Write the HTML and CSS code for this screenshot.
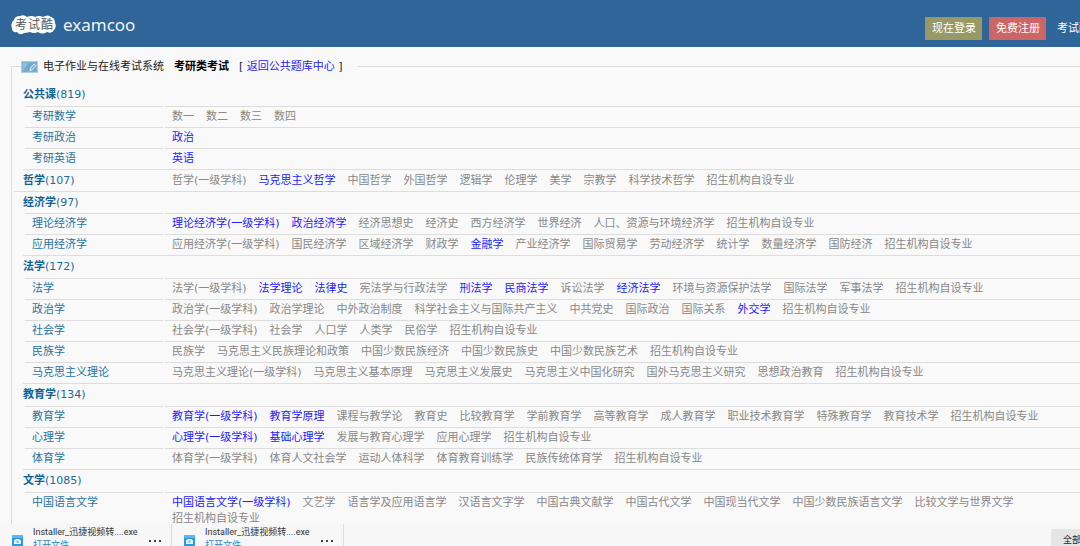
FILE: index.html
```html
<!DOCTYPE html>
<html lang="zh-CN">
<head>
<meta charset="utf-8">
<title>考试酷 examcoo - 考研类考试</title>
<link rel="stylesheet" href="styles.css">
</head>
<body>
<header class="topbar">
  <a class="brand" href="#">
    <svg class="brand-mark" viewBox="0 0 46 20" role="img" aria-label="考试酷">
      <path class="cloud" d="M3 5Q4 1 9 1Q13 -1 16 2Q21 0 24 2Q28 0 32 2Q37 -1 40 2Q44 3 44 8Q46 12 43 15Q41 19 36 17Q31 20 27 17Q23 19 19 17Q15 18 13 18Q9 21 6 17Q1 18 1 13Q-1 8 3 5Z"/>
      <text class="cloud-text" x="4" y="14">考</text>
      <text class="cloud-text" x="17" y="14">试</text>
      <text class="cloud-text" x="30" y="14">酷</text>
    </svg>
    <span class="brand-name">examcoo</span>
  </a>
  <nav class="topnav">
    <a class="btn login" href="#">现在登录</a>
    <a class="btn signup" href="#">免费注册</a>
    <a class="more" href="#">考试酷</a>
  </nav>
</header>

<main class="page">
  <fieldset class="catalog">
    <legend class="crumbs">
      <svg class="crumb-icon" viewBox="0 0 17 12" aria-hidden="true">
        <rect x="0.500" y="0.500" width="16" height="11" fill="#7eb2d3" stroke="#a9cde3"/>
        <path d="M2 2h13v8H2z" fill="#6fa9cd"/>
        <path d="M2 10l5-8H2z" fill="#8fbfdb"/>
        <path d="M9 9.500l.6-2.500L13 3l2 1.600-3.600 4z" fill="#7eb2d3" stroke="#e4f1f8" stroke-width=".9"/>
      </svg>
      <span>电子作业与在线考试系统</span>
      <strong>考研类考试</strong>
      <span class="back">[ <a href="#">返回公共题库中心</a> ]</span>
    </legend>

    <section class="group first">
      <h2><a href="#">公共课</a>(819)</h2>
      <table>
        <tr><th scope="row"><a href="#">考研数学</a></th><td><ul><li>数一</li><li>数二</li><li>数三</li><li>数四</li></ul></td></tr>
        <tr><th scope="row"><a href="#">考研政治</a></th><td><ul><li><a href="#">政治</a></li></ul></td></tr>
        <tr><th scope="row"><a href="#">考研英语</a></th><td><ul><li><a href="#">英语</a></li></ul></td></tr>
      </table>
    </section>

    <section class="group inline">
      <h2><a href="#">哲学</a>(107)</h2>
      <ul><li>哲学(一级学科)</li><li><a href="#">马克思主义哲学</a></li><li>中国哲学</li><li>外国哲学</li><li>逻辑学</li><li>伦理学</li><li>美学</li><li>宗教学</li><li>科学技术哲学</li><li>招生机构自设专业</li></ul>
    </section>

    <section class="group wide">
      <h2><a href="#">经济学</a>(97)</h2>
      <table>
        <tr><th scope="row"><a href="#">理论经济学</a></th><td><ul><li><a href="#">理论经济学(一级学科)</a></li><li><a href="#">政治经济学</a></li><li>经济思想史</li><li>经济史</li><li>西方经济学</li><li>世界经济</li><li>人口、资源与环境经济学</li><li>招生机构自设专业</li></ul></td></tr>
        <tr><th scope="row"><a href="#">应用经济学</a></th><td><ul><li>应用经济学(一级学科)</li><li>国民经济学</li><li>区域经济学</li><li>财政学</li><li><a href="#">金融学</a></li><li>产业经济学</li><li>国际贸易学</li><li>劳动经济学</li><li>统计学</li><li>数量经济学</li><li>国防经济</li><li>招生机构自设专业</li></ul></td></tr>
      </table>
    </section>

    <section class="group">
      <h2><a href="#">法学</a>(172)</h2>
      <table>
        <tr><th scope="row"><a href="#">法学</a></th><td><ul><li>法学(一级学科)</li><li><a href="#">法学理论</a></li><li><a href="#">法律史</a></li><li>宪法学与行政法学</li><li><a href="#">刑法学</a></li><li><a href="#">民商法学</a></li><li>诉讼法学</li><li><a href="#">经济法学</a></li><li>环境与资源保护法学</li><li>国际法学</li><li>军事法学</li><li>招生机构自设专业</li></ul></td></tr>
        <tr><th scope="row"><a href="#">政治学</a></th><td><ul><li>政治学(一级学科)</li><li>政治学理论</li><li>中外政治制度</li><li>科学社会主义与国际共产主义</li><li>中共党史</li><li>国际政治</li><li>国际关系</li><li><a href="#">外交学</a></li><li>招生机构自设专业</li></ul></td></tr>
        <tr><th scope="row"><a href="#">社会学</a></th><td><ul><li>社会学(一级学科)</li><li>社会学</li><li>人口学</li><li>人类学</li><li>民俗学</li><li>招生机构自设专业</li></ul></td></tr>
        <tr><th scope="row"><a href="#">民族学</a></th><td><ul><li>民族学</li><li>马克思主义民族理论和政策</li><li>中国少数民族经济</li><li>中国少数民族史</li><li>中国少数民族艺术</li><li>招生机构自设专业</li></ul></td></tr>
        <tr><th scope="row"><a href="#">马克思主义理论</a></th><td><ul><li>马克思主义理论(一级学科)</li><li>马克思主义基本原理</li><li>马克思主义发展史</li><li>马克思主义中国化研究</li><li>国外马克思主义研究</li><li>思想政治教育</li><li>招生机构自设专业</li></ul></td></tr>
      </table>
    </section>

    <section class="group">
      <h2><a href="#">教育学</a>(134)</h2>
      <table>
        <tr><th scope="row"><a href="#">教育学</a></th><td><ul><li><a href="#">教育学(一级学科)</a></li><li><a href="#">教育学原理</a></li><li>课程与教学论</li><li>教育史</li><li>比较教育学</li><li>学前教育学</li><li>高等教育学</li><li>成人教育学</li><li>职业技术教育学</li><li>特殊教育学</li><li>教育技术学</li><li>招生机构自设专业</li></ul></td></tr>
        <tr><th scope="row"><a href="#">心理学</a></th><td><ul><li><a href="#">心理学(一级学科)</a></li><li><a href="#">基础心理学</a></li><li>发展与教育心理学</li><li>应用心理学</li><li>招生机构自设专业</li></ul></td></tr>
        <tr><th scope="row"><a href="#">体育学</a></th><td><ul><li>体育学(一级学科)</li><li>体育人文社会学</li><li>运动人体科学</li><li>体育教育训练学</li><li>民族传统体育学</li><li>招生机构自设专业</li></ul></td></tr>
      </table>
    </section>

    <section class="group">
      <h2><a href="#">文学</a>(1085)</h2>
      <table>
        <tr><th scope="row"><a href="#">中国语言文学</a></th><td><ul><li><a href="#">中国语言文学(一级学科)</a></li><li>文艺学</li><li>语言学及应用语言学</li><li>汉语言文字学</li><li>中国古典文献学</li><li>中国古代文学</li><li>中国现当代文学</li><li>中国少数民族语言文学</li><li>比较文学与世界文学</li><li>招生机构自设专业</li></ul></td></tr>
      </table>
    </section>
  </fieldset>
</main>

<footer class="downloads">
  <div class="download">
    <svg class="file-icon" viewBox="0 0 11 12" aria-hidden="true">
      <rect width="11" height="12" rx="1" fill="#2b9be0"/>
      <path d="M0 1q0-1 1-1h9q1 0 1 1v2H0z" fill="#56b9f0"/>
      <path d="M2 5.500L4 4h3l2 1.500V9H2z" fill="#e8f5fd"/>
      <circle cx="5.500" cy="6.800" r="1.200" fill="#6cc0f0"/>
    </svg>
    <div class="file">
      <span>Installer_迅捷视频转....exe</span>
      <a href="#">打开文件</a>
    </div>
    <button class="dots" type="button" aria-label="更多"><i></i><i></i><i></i></button>
  </div>
  <div class="download">
    <svg class="file-icon" viewBox="0 0 11 12" aria-hidden="true">
      <rect width="11" height="12" rx="1" fill="#2b9be0"/>
      <path d="M0 1q0-1 1-1h9q1 0 1 1v2H0z" fill="#56b9f0"/>
      <path d="M2 5.500L4 4h3l2 1.500V9H2z" fill="#e8f5fd"/>
      <circle cx="5.500" cy="6.800" r="1.200" fill="#6cc0f0"/>
    </svg>
    <div class="file">
      <span>Installer_迅捷视频转....exe</span>
      <a href="#">打开文件</a>
    </div>
    <button class="dots" type="button" aria-label="更多"><i></i><i></i><i></i></button>
  </div>
  <button class="show-all" type="button">全部显示</button>
</footer>
</body>
</html>
```

FILE: styles.css
```css
* { box-sizing: border-box; }

body {
  margin: 0;
  height: 100vh;
  display: flex;
  flex-direction: column;
  overflow: hidden;
  background: #f9f9f9;
  color: #888;
  font: 11px/16px "DejaVu Sans", "Noto Sans CJK SC", sans-serif;
}

a { color: #1c1cff; text-decoration: none; }
ul { list-style: none; margin: 0; padding: 0; }

/* Top bar */
.topbar {
  flex: none;
  display: flex;
  align-items: center;
  justify-content: space-between;
  height: 47px;
  padding-left: 11px;
  background: #2f6598;
}
.brand { display: flex; align-items: center; gap: 6px; padding-top: 2px; }
.brand-mark { width: 46px; height: 20px; }
.cloud { fill: #fff; }
.cloud-text { font: 12px "Noto Sans CJK SC", sans-serif; fill: #555; }
.brand-name { font: 17px/24px "Noto Sans", sans-serif; color: #eef3f8; }
.topnav { display: flex; align-items: center; gap: 7px; padding-top: 10px; }
.btn { padding: 1px 6px 0 7px; line-height: 22px; color: #fff; }
.login { background: #999966; }
.signup { background: #cc6666; }
.more { width: 27px; padding: 1px 0 0 4px; overflow: hidden; white-space: nowrap; color: #fff; }

/* Catalogue */
.page { flex: 1; min-height: 0; overflow: hidden; padding: 10px 0 0 11px; }
.catalog {
  min-width: 0;
  margin: 0;
  padding: 0 0 0 11px;
  border: solid #ddd;
  border-width: 1px 0 0 1px;
}
.crumbs {
  display: flex;
  align-items: center;
  gap: 10px;
  margin-left: -2px;
  padding: 2px 14px 0 0;
  line-height: 16px;
  color: #222;
}
.crumb-icon { width: 17px; height: 12px; margin-right: -5px; }
.crumbs strong { color: #000; }

.group { border-top: 1px solid #ddd; }
.group.first { border-top: 0; padding-top: 9px; }
.group.wide { margin-left: -9px; padding-left: 9px; }
.group.inline { display: flex; align-items: center; }
.group h2 { margin: 0; font-size: 11px; line-height: 22px; font-weight: normal; color: #1a6a9c; }
.group h2 a { font-weight: bold; color: #0f6296; }
.group.inline h2 { width: 149px; }
.group.inline h2, .group.wide h2 { line-height: 21px; }

table { width: calc(100% + 2px); border-collapse: separate; border-spacing: 2px 0; }
th, td { padding: 2px 7px; border-top: 1px solid #ddd; text-align: left; vertical-align: top; font-weight: normal; }
th { width: 138px; }
th a { color: #2873a0; }
li { display: inline-block; margin-right: 12px; }

/* Downloads shelf */
.downloads {
  flex: none;
  display: flex;
  align-items: flex-start;
  height: 22px;
  overflow: hidden;
  background: #f7f7f7;
}
.download { display: flex; align-items: flex-start; width: 172px; height: 22px; padding: 2px 10px 0 12px; border-right: 1px solid #ddd; }
.file-icon { flex: none; width: 11px; height: 12px; margin-top: 9px; }
.file { margin-left: 10px; width: 110px; font: 9px/13px Roboto, "Noto Sans CJK SC", sans-serif; color: #333; white-space: nowrap; }
.file span, .file a { display: block; }
.file a { color: #2b86c5; }
.dots { display: flex; gap: 3px; margin: 14px 0 0 6px; padding: 0; border: 0; background: none; }
.dots i { width: 2px; height: 2px; background: #444; }
.show-all {
  width: 29px;
  margin: 5px 0 0 auto;
  padding: 3px 0 0 12px;
  overflow: hidden;
  border: 0;
  background: #e5e5e5;
  color: #222;
  font: 9px/16px "Noto Sans CJK SC", sans-serif;
  text-align: left;
  white-space: nowrap;
}
```
